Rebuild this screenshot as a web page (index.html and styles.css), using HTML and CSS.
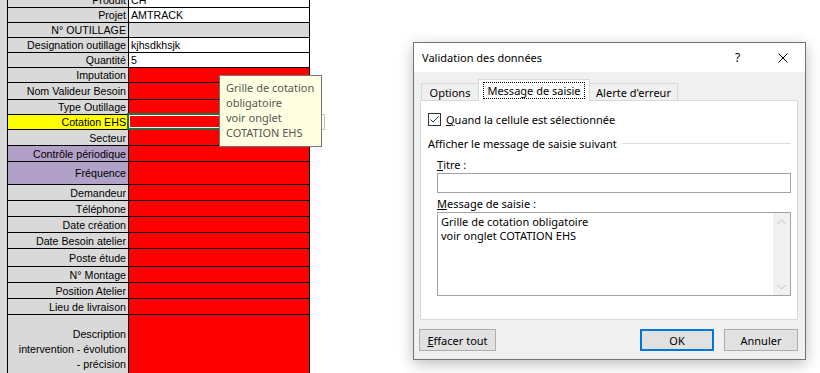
FILE: index.html
```html
<!DOCTYPE html>
<html lang="fr">
<head>
<meta charset="utf-8">
<title>Validation des données</title>
<link rel="stylesheet" href="styles.css">
</head>
<body>
<div class="screen">
  <div class="sheet">
    <div class="gutter"></div>
    <div class="grid">
      <div class="row h16"><div class="lbl">Produit</div><div class="val white">CH</div></div>
      <div class="row h15"><div class="lbl">Projet</div><div class="val white">AMTRACK</div></div>
      <div class="row h15"><div class="lbl">N° OUTILLAGE</div><div class="val gray"></div></div>
      <div class="row h15"><div class="lbl">Designation outillage</div><div class="val white">kjhsdkhsjk</div></div>
      <div class="row h15"><div class="lbl">Quantité</div><div class="val white">5</div></div>
      <div class="row h15"><div class="lbl">Imputation</div><div class="val"></div></div>
      <div class="row h17"><div class="lbl">Nom Valideur Besoin</div><div class="val"></div></div>
      <div class="row h15"><div class="lbl">Type Outillage</div><div class="val"></div></div>
      <div class="row h15"><div class="lbl yellow">Cotation EHS</div><div class="val"></div></div>
      <div class="row h16"><div class="lbl">Secteur</div><div class="val"></div></div>
      <div class="row h16"><div class="lbl purple">Contrôle périodique</div><div class="val"></div></div>
      <div class="row h23"><div class="lbl purple">Fréquence</div><div class="val"></div></div>
      <div class="row h16"><div class="lbl">Demandeur</div><div class="val"></div></div>
      <div class="row h16"><div class="lbl">Téléphone</div><div class="val"></div></div>
      <div class="row h16"><div class="lbl">Date création</div><div class="val"></div></div>
      <div class="row h16"><div class="lbl">Date Besoin atelier</div><div class="val"></div></div>
      <div class="row h18"><div class="lbl">Poste étude</div><div class="val"></div></div>
      <div class="row h16"><div class="lbl">N° Montage</div><div class="val"></div></div>
      <div class="row h16"><div class="lbl">Position Atelier</div><div class="val"></div></div>
      <div class="row h16"><div class="lbl">Lieu de livraison</div><div class="val"></div></div>
      <div class="row h70"><div class="lbl multi">Description<br>intervention - évolution<br>- précision</div><div class="val"></div></div>
    </div>
  </div>

  <div class="selection"></div>
  <div class="dropdown"></div>
  <div class="tooltip">Grille de cotation<br>obligatoire<br>voir onglet<br>COTATION EHS</div>

  <div class="dialog">
    <div class="titlebar">
      <div class="title">Validation des données</div>
      <div class="tbtn help">?</div>
      <div class="tbtn close">
        <svg width="10" height="10" viewBox="0 0 10 10"><path d="M0.5 0.5 L9.5 9.5 M9.5 0.5 L0.5 9.5" stroke="#000" stroke-width="1" fill="none"/></svg>
      </div>
    </div>
    <div class="dbody">
      <div class="tabs">
        <div class="tab options">Options</div>
        <div class="tab active"><span class="focus">Message de saisie</span></div>
        <div class="tab alert">Alerte d'erreur</div>
      </div>
      <div class="panel">
        <div class="chk-row">
          <svg width="13" height="13" viewBox="0 0 13 13"><rect x="0.5" y="0.5" width="12" height="12" fill="#fff" stroke="#333"/><path d="M2.5 6.5 L5 9 L10.5 3.5" fill="none" stroke="#333" stroke-width="1"/></svg>
          <span><u>Q</u>uand la cellule est sélectionnée</span>
        </div>
        <div class="group-head"><span>Afficher le message de saisie suivant</span><div class="gline"></div></div>
        <div class="group">
          <div class="field-label"><u>T</u>itre :</div>
          <div class="input"></div>
          <div class="field-label second"><u>M</u>essage de saisie :</div>
          <div class="textarea">
            <div class="ta-text">Grille de cotation obligatoire<br>voir onglet COTATION EHS</div>
            <div class="scroll">
              <div class="sbtn"><svg width="9" height="6" viewBox="0 0 9 6"><path d="M0.5 5 L4.5 1 L8.5 5" stroke="#c2c2c2" fill="none"/></svg></div>
              <div class="sbtn"><svg width="9" height="6" viewBox="0 0 9 6"><path d="M0.5 1 L4.5 5 L8.5 1" stroke="#c2c2c2" fill="none"/></svg></div>
            </div>
          </div>
        </div>
      </div>
      <div class="footer">
        <div class="btn clear"><span><u>E</u>ffacer tout</span></div>
        <div class="btn ok">OK</div>
        <div class="btn cancel">Annuler</div>
      </div>
    </div>
  </div>
</div>
</body>
</html>
```
FILE: styles.css
```css
* { box-sizing: border-box; }
html, body { margin: 0; padding: 0; overflow: hidden; background: #fff; }
.screen { position: relative; width: 820px; height: 373px; overflow: hidden; }

/* spreadsheet */
.sheet { display: flex; margin-top: -8px; font-family: "Liberation Sans", Arial, sans-serif; font-size: 10.67px; color: #000; }
.gutter { width: 7px; background: #d9d9d9; }
.grid { display: flex; flex-direction: column; border-left: 1px solid #000; }
.row { display: flex; border-bottom: 1px solid #000; }
.h15 { height: 15px; } .h16 { height: 16px; } .h17 { height: 17px; } .h18 { height: 18px; }
.h23 { height: 23px; } .h70 { height: 70px; }
.lbl { width: 121px; border-right: 1px solid #000; background: #d9d9d9; display: flex; align-items: center; justify-content: flex-end; text-align: right; padding-right: 2px; line-height: 12px; white-space: nowrap; }
.lbl.multi { line-height: 15px; }
.lbl.yellow { background: #ffff00; }
.lbl.purple { background: #b1a0c7; }
.val { width: 181px; border-right: 1px solid #000; background: #ff0000; display: flex; align-items: center; padding-left: 2px; line-height: 12px; }
.val.white { background: #fff; }
.val.gray { background: #d9d9d9; }

.selection { position: absolute; left: 127px; top: 113px; width: 184px; height: 17px; border: 2px solid #217346; box-shadow: inset 0 0 0 1px #fff; }
.dropdown { position: absolute; left: 310px; top: 114px; width: 15px; height: 16px; border: 1px solid #c6c6c6; background: #fff; }
.tooltip { position: absolute; left: 219px; top: 75px; width: 103px; height: 72px; background: #ffffe1; border: 1px solid #767676; padding: 4px 0 0 6px; font-family: "Noto Sans", sans-serif; font-size: 11px; line-height: 15px; color: #575757; white-space: nowrap; }

/* dialog */
.dialog { position: absolute; left: 413px; top: 42px; width: 393px; height: 318px; border: 1px solid #737373; background: #f0f0f0; box-shadow: 0 4px 14px rgba(0,0,0,0.26); display: flex; flex-direction: column; font-family: "Noto Sans", sans-serif; font-size: 11px; color: #000; }
.titlebar { height: 29px; background: #fff; display: flex; align-items: center; padding-left: 8px; flex: none; }
.title { flex: 1; font-size: 11px; }
.tbtn { width: 45px; height: 29px; display: flex; align-items: center; justify-content: center; }
.tbtn.help { font-size: 12px; }
.dbody { flex: 1; padding: 7px 7px 0 6px; display: flex; flex-direction: column; }
.tabs { display: flex; align-items: flex-end; padding-left: 1px; height: 22px; margin-bottom: -1px; position: relative; z-index: 1; }
.tab { height: 17px; margin-bottom: 1px; border: 1px solid #d9d9d9; border-bottom: none; background: #f0f0f0; display: flex; align-items: center; justify-content: center; line-height: 15px; }
.tab.options { width: 57px; border-right: none; }
.tab.active { width: 112px; height: 22px; margin-bottom: 0; background: #fff; align-items: flex-start; padding-top: 2px; }
.tab.alert { width: 88px; border-left: none; }
.focus { border: 1px dotted #000; padding: 0 3px; line-height: 15px; }
.panel { height: 220px; background: #fff; border: 1px solid #d9d9d9; padding: 0 6px 0 7px; display: flex; flex-direction: column; }
.chk-row { margin-top: 12px; height: 13px; display: flex; align-items: center; gap: 5px; line-height: 15px; }
.chk-row svg { flex: none; }
.group-head { margin-top: 10px; display: flex; align-items: center; line-height: 15px; }
.gline { flex: 1; height: 1px; background: #dcdcdc; margin-left: 5px; }
.group { padding-left: 9px; display: flex; flex-direction: column; }
.field-label { margin-top: 6px; line-height: 15px; }
.field-label.second { margin-top: 3px; }
.input { margin-top: 1px; height: 20px; border: 1px solid #a2a2a2; background: #fff; }
.textarea { margin-top: 1px; height: 84px; border: 1px solid #a2a2a2; background: #fff; display: flex; }
.ta-text { flex: 1; padding: 2px 3px; line-height: 14px; }
.scroll { width: 17px; background: #f0f0f0; display: flex; flex-direction: column; justify-content: space-between; }
.sbtn { height: 17px; display: flex; align-items: center; justify-content: center; }
.footer { display: flex; gap: 10px; margin-top: 9px; }
.btn { height: 22px; border: 1px solid #adadad; background: #e1e1e1; display: flex; align-items: center; justify-content: center; line-height: 15px; }
.btn.clear { width: 77px; margin-left: -1px; margin-right: auto; }
.btn.ok { width: 74px; border: 2px solid #0078d7; }
.btn.cancel { width: 74px; }
```
